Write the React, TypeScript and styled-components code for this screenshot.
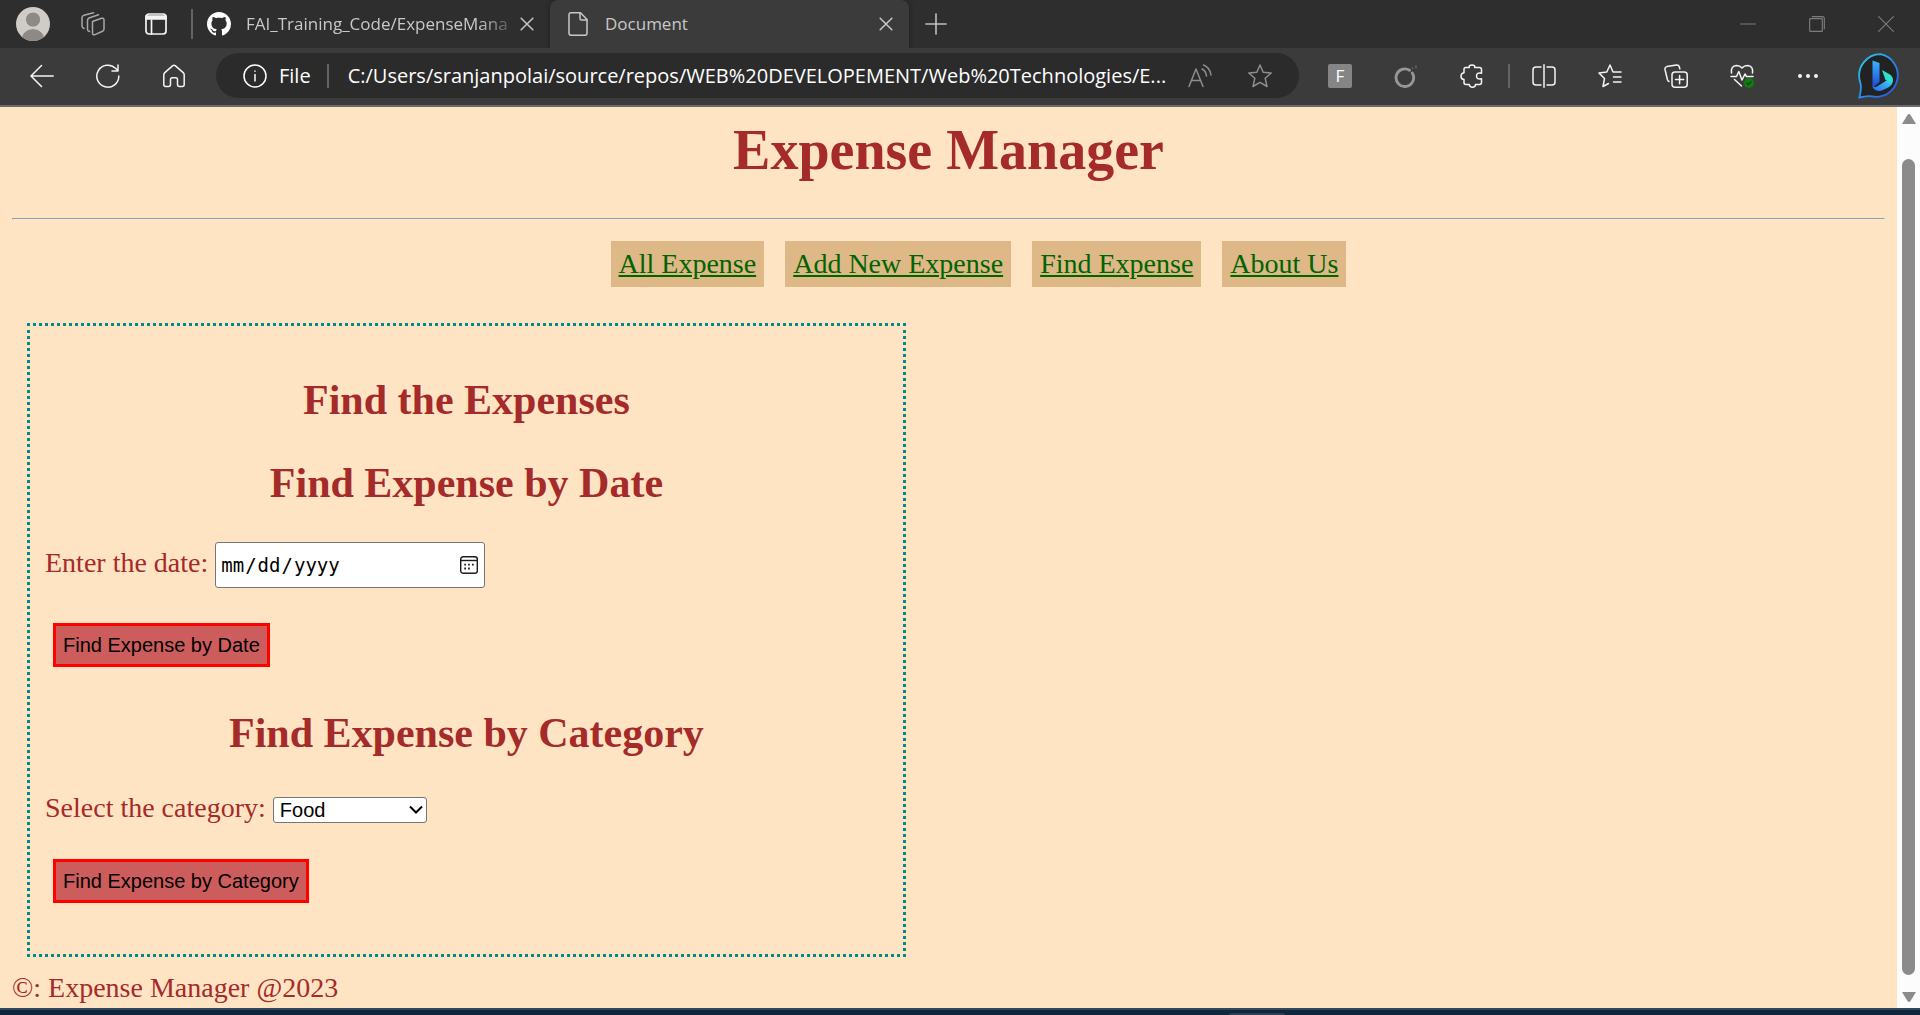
import React, { useState } from "react";
import styled, { createGlobalStyle } from "styled-components";

const GlobalStyle = createGlobalStyle`
  *, *::before, *::after { box-sizing: border-box; }
  body {
    margin: 0;
    background: #ffe4c4;
    font-family: "Liberation Serif", "Times New Roman", serif;
  }
  button { font: inherit; color: inherit; }
`;

const uiFont = `"Open Sans", "Noto Sans", sans-serif`;

const Screen = styled.div`
  min-height: 100vh;
  display: flex;
  flex-direction: column;
`;

/* ---------- tab strip ---------- */

const TabStrip = styled.div`
  display: flex;
  height: 48px;
  background: #2e2e2e;
  font-family: ${uiFont};
  font-size: 17px;
  color: #c8c8c8;
`;

const IconButton = styled.button<{ $width: number; $color?: string }>`
  flex: none;
  width: ${(p) => p.$width}px;
  padding: 0;
  border: 0;
  background: none;
  color: ${(p) => p.$color ?? "#f4f4f4"};
  display: flex;
  align-items: center;
  justify-content: center;
`;

const Tab = styled.div<{ $active?: boolean; $width: number }>`
  flex: 0 1 ${(p) => p.$width}px;
  min-width: 0;
  display: flex;
  align-items: center;
  padding: 0 16px 0 ${(p) => (p.$active ? 16 : 14)}px;
  background: ${(p) => (p.$active ? "#3b3b3b" : "transparent")};
  border-radius: 8px 8px 0 0;
  box-shadow: ${(p) => (p.$active ? "0 0 4px #1c1c1c" : "none")};
  svg { flex: none; }
`;

const TabTitle = styled.span<{ $fade?: boolean }>`
  flex: 1;
  min-width: 0;
  margin-left: 15px;
  overflow: hidden;
  white-space: nowrap;
  line-height: 24px;
  mask-image: ${(p) =>
    p.$fade ? "linear-gradient(to right, #000 85%, transparent)" : "none"};
`;

const Rule = styled.span<{ $height: number }>`
  flex: none;
  align-self: center;
  width: 2px;
  height: ${(p) => p.$height}px;
  background: #646464;
`;

const Spacer = styled.div`
  flex: 1;
`;

/* ---------- toolbar ---------- */

const Toolbar = styled.div`
  position: relative;
  display: flex;
  align-items: center;
  height: 59px;
  padding: 0 17px 2px 9px;
  background: #3b3b3b;
  border-bottom: 2px solid #6b6b6b;
  font-family: ${uiFont};
`;

const AddressBar = styled.div`
  flex: 1;
  min-width: 0;
  display: flex;
  align-items: center;
  height: 45px;
  margin: 0 8px 0 9px;
  padding: 0 9px 0 27px;
  border-radius: 23px;
  background: #2b2b2b;
  color: #ffffff;
  font-size: 20px;
`;

const SchemeLabel = styled.label`
  display: flex;
  align-items: center;
  gap: 12px;
  padding-right: 16px;
`;

const AddressInput = styled.input`
  flex: 1;
  min-width: 0;
  margin-left: 19px;
  padding: 0;
  border: 0;
  outline: 0;
  background: none;
  color: inherit;
  font: inherit;
  text-overflow: ellipsis;
`;

const ToolRule = styled(Rule)`
  margin: 0 1px 0 3px;
`;

const LetterBadge = styled.span`
  width: 24px;
  height: 24px;
  border-radius: 2px;
  background: #858585;
  color: #ffffff;
  font-size: 17px;
  line-height: 24px;
`;

const AssistantButton = styled(IconButton)`
  margin-left: 17px;
`;

/* ---------- page ---------- */

const Viewport = styled.div`
  flex: 1;
  display: flex;
`;

const Page = styled.div`
  flex: 1;
  min-width: 0;
  padding: 11px 12px 4px;
  color: #a52a2a;
  background: #ffe4c4;
  font-size: 28px;
  line-height: 32px;
`;

const Title = styled.h1`
  margin: 0 0 36px;
  font-size: 56px;
  line-height: 64px;
  text-align: center;
`;

const Divider = styled.hr`
  margin: 0 0 21px;
  border: 1px solid;
  border-color: #9a9a9a #eeeeee #eeeeee #9a9a9a;
`;

const Nav = styled.nav`
  display: flex;
  flex-wrap: wrap;
  justify-content: center;
  gap: 21px;
  padding-left: 60px;
`;

const NavLink = styled.a`
  padding: 7px 8px;
  background: #deb887;
  color: #006400;
`;

const Panel = styled.main`
  display: flex;
  flex-direction: column;
  gap: 35px;
  box-sizing: content-box;
  width: 45%;
  margin: 36px 15px 15px;
  padding: 50px 15px 51px;
  border: 3px dotted #008b8b;
`;

const Form = styled.form`
  display: flex;
  flex-direction: column;
  gap: 35px;

  & + & { margin-top: 7px; }
`;

const Heading = styled.h2`
  margin: 0;
  font-size: 42px;
  line-height: 48px;
  text-align: center;
`;

const Field = styled.div`
  display: flex;
  align-items: baseline;
  gap: 7px;
`;

const ControlBox = styled.div`
  position: relative;
  display: flex;

  svg {
    position: absolute;
    top: 0;
    bottom: 0;
    margin: auto 0;
    pointer-events: none;
  }
`;

const DateBox = styled(ControlBox)`
  svg { right: 7px; }
`;

const SelectBox = styled(ControlBox)`
  svg { right: 4px; }
`;

const DateInput = styled.input`
  width: 270px;
  height: 46px;
  padding: 0 6px 0 4px;
  border: 1px solid #767676;
  border-radius: 3px;
  background: #ffffff;
  color: #000000;
  font-family: "DejaVu Sans Mono", monospace;
  font-size: 19px;

  &::-webkit-calendar-picker-indicator { opacity: 0; }
`;

const CategorySelect = styled.select`
  appearance: none;
  width: 154px;
  height: 26px;
  padding: 0 24px 0 6px;
  border: 1px solid #767676;
  border-radius: 3px;
  background: #ffffff;
  color: #000000;
  font-family: "Liberation Sans", Arial, sans-serif;
  font-size: 20px;
`;

const SubmitButton = styled.button`
  align-self: flex-start;
  margin: 0 8px;
  padding: 7px;
  border: 3px solid #ff0000;
  background: #cd5c5c;
  color: #000000;
  font-family: "Liberation Sans", Arial, sans-serif;
  font-size: 20px;
  line-height: 24px;
`;

/* ---------- scrollbar and desktop edge ---------- */

const ScrollTrack = styled.div`
  width: 23px;
  display: flex;
  flex-direction: column;
  align-items: center;
  justify-content: space-between;
  padding: 7px 0 6px;
  background: #fcfcfc;
`;

const ScrollThumb = styled.div`
  flex: 1;
  width: 13px;
  margin: 35px 0 17px;
  border-radius: 7px;
  background: #8b8b8b;
`;

const DesktopEdge = styled.div`
  display: flex;
  align-items: flex-end;
  height: 7px;
  padding-left: 64%;
  background: #10263c;
  border-top: 2px solid #33475a;
`;

const DesktopHandle = styled.div`
  width: 56px;
  height: 2px;
  border-radius: 2px 2px 0 0;
  background: #2c3d50;
`;

/* ---------- drawings ---------- */

type IconProps = { children: React.ReactNode; size?: number; weight?: number };

const Icon = ({ children, size = 24, weight = 1.5 }: IconProps) => (
  <svg
    width={size}
    height={size}
    viewBox="0 0 24 24"
    fill="none"
    stroke="currentColor"
    strokeWidth={weight}
    strokeLinecap="round"
    strokeLinejoin="round"
    aria-hidden="true"
  >
    {children}
  </svg>
);

const CloseIcon = () => (
  <Icon size={14} weight={2.6}>
    <path d="M2 2l20 20M22 2L2 22" />
  </Icon>
);

const AvatarIcon = () => (
  <svg width="34" height="34" viewBox="0 0 34 34" aria-hidden="true">
    <clipPath id="avatarClip"><circle cx="17" cy="17" r="17" /></clipPath>
    <circle cx="17" cy="17" r="17" fill="#cfccc8" />
    <g clipPath="url(#avatarClip)" fill="#8e8985" stroke="#dedbd7" strokeWidth="0.8">
      <circle cx="17" cy="12.6" r="7.6" />
      <ellipse cx="17" cy="32" rx="11.6" ry="10.4" />
    </g>
  </svg>
);

const GithubIcon = () => (
  <svg width="24" height="24" viewBox="0 0 16 16" fill="#ffffff" aria-hidden="true">
    <path d="M8 0C3.58 0 0 3.58 0 8c0 3.54 2.29 6.53 5.47 7.59.4.07.55-.17.55-.38 0-.19-.01-.82-.01-1.49-2.01.37-2.53-.49-2.69-.94-.09-.23-.48-.94-.82-1.13-.28-.15-.68-.52-.01-.53.63-.01 1.08.58 1.23.82.72 1.21 1.87.87 2.33.66.07-.52.28-.87.51-1.07-1.78-.2-3.64-.89-3.64-3.95 0-.87.31-1.59.82-2.15-.08-.2-.36-1.02.08-2.12 0 0 .67-.21 2.2.82.64-.18 1.32-.27 2-.27s1.36.09 2 .27c1.53-1.04 2.2-.82 2.2-.82.44 1.1.16 1.92.08 2.12.51.56.82 1.27.82 2.15 0 3.07-1.87 3.75-3.65 3.95.29.25.54.73.54 1.48 0 1.07-.01 1.93-.01 2.2 0 .21.15.46.55.38A8.01 8.01 0 0 0 16 8c0-4.42-3.58-8-8-8z" />
  </svg>
);

const AssistantIcon = () => (
  <svg width="45" height="46" viewBox="0 0 45 46" aria-hidden="true">
    <defs>
      <linearGradient id="bubble" x1="0" y1="0" x2="1" y2="1">
        <stop offset="0" stopColor="#25d4ec" />
        <stop offset="0.5" stopColor="#2b8cf0" />
        <stop offset="1" stopColor="#2350e0" />
      </linearGradient>
      <linearGradient id="stem" x1="0" y1="0" x2="0" y2="1">
        <stop offset="0" stopColor="#38b6ff" />
        <stop offset="1" stopColor="#1d46d8" />
      </linearGradient>
      <linearGradient id="bowl" x1="0" y1="1" x2="1" y2="0">
        <stop offset="0" stopColor="#2b64ee" />
        <stop offset="1" stopColor="#38d6f5" />
      </linearGradient>
    </defs>
    <path
      d="M22.500 1.200A21.500 21.500 0 1 1 14 43.400C9 42.400 5 44.200 1.400 44.600C2.600 40 3.600 36 2.600 31L1.600 27A21.500 21.500 0 0 1 22.500 1.200Z"
      fill="#222222"
      stroke="url(#bubble)"
      strokeWidth="1.800"
    />
    <path d="M14.500 7.500L21.500 10V29L15 34.500C14.600 34 14.500 33.400 14.500 32.500Z" fill="url(#stem)" />
    <path d="M24 17L32 21.500C36 24.500 35.500 29 33.500 31.500C32 29 30 28.200 27.500 27Z" fill="#2fe0cc" />
    <path d="M14.500 32C15.500 35 18 34.500 21.500 32L29 27.300C32 28 34 30 33.800 31.200C32 34 27 36.300 23 37.800C18 38.700 14.500 36 14.500 32Z" fill="url(#bowl)" />
  </svg>
);

const ArrowHead = ({ down }: { down?: boolean }) => (
  <svg width="14" height="10" viewBox="0 0 14 10" fill="#8b8b8b" aria-hidden="true">
    <path d={down ? "M0 0H14L8.500 9Q7 11 5.500 9Z" : "M0 10H14L8.500 1Q7 -1 5.500 1Z"} />
  </svg>
);

const CalendarIcon = () => (
  <svg width="18" height="18" viewBox="0 0 18 18" fill="none" stroke="#1d1d1d" strokeWidth="1.400" aria-hidden="true">
    <rect x="0.700" y="0.700" width="16.600" height="16.600" rx="2.600" />
    <path d="M1 4.500H17" />
    <path d="M4.300 8.700h1.700M8.100 8.700h1.700M12 8.700h1.700M4.300 12.500h1.700M8.100 12.500h1.700" strokeWidth="1.800" />
  </svg>
);

const ChevronIcon = () => (
  <svg width="14" height="10" viewBox="0 0 14 10" fill="none" stroke="#000000" strokeWidth="2" aria-hidden="true">
    <path d="M1 1.500L7 7.500L13 1.500" />
  </svg>
);

const starPath =
  "M12 1L15.200 8.200L23.200 9L17.200 14.300L19 22.500L12 18.400L5 22.500L6.800 14.300L0.800 9L8.800 8.200Z";

const navItems = ["All Expense", "Add New Expense", "Find Expense", "About Us"];
const categories = ["Food", "Entertain", "Travel", "Rent"];

export default function App() {
  const [category, setCategory] = useState("Food");
  const hold = (e: React.FormEvent) => e.preventDefault();

  return (
    <Screen>
      <GlobalStyle />

      <TabStrip>
        <IconButton $width={66} aria-label="Profile"><AvatarIcon /></IconButton>
        <IconButton $width={54} $color="#a8a8a8" aria-label="Workspaces">
          <Icon weight={1.5}>
            <path d="M11.500 9.500L20.500 6.300Q23 5.600 23 8V17Q23 18.600 21.500 19.300L14 22.600Q11.500 23.500 11.500 21V10.500Q11.500 9.700 12.500 9.200" />
            <path d="M8.500 19.500Q6.500 19 6.500 17.500V8.500Q6.500 6.600 8 6L17.500 2.800" />
            <path d="M3 16.500Q1 15.500 1 14V5.500Q1 3.800 3 3.200L12.500 0.800" />
          </Icon>
        </IconButton>
        <IconButton $width={71} aria-label="Tab actions">
          <Icon weight={1.7}>
            <rect x="2" y="2" width="20" height="20" rx="3" />
            <path d="M2 4h20v3H2z" fill="currentColor" />
            <path d="M7.500 8v14" />
          </Icon>
        </IconButton>
        <Rule $height={30} />
        <Tab $width={357}>
          <GithubIcon />
          <TabTitle $fade>FAI_Training_Code/ExpenseMana</TabTitle>
          <IconButton $width={14} $color="#c8c8c8" aria-label="Close tab"><CloseIcon /></IconButton>
        </Tab>
        <Tab $width={359} $active>
          <Icon>
            <path d="M5 0.800H14.500L21 7.500V21Q21 23.200 19 23.200H5Q3 23.200 3 21V3Q3 0.800 5 0.800Z" />
            <path d="M14 1V6.500Q14 8 15.500 8H21" />
          </Icon>
          <TabTitle>Document</TabTitle>
          <IconButton $width={14} $color="#c8c8c8" aria-label="Close tab"><CloseIcon /></IconButton>
        </Tab>
        <IconButton $width={53} $color="#c0c0c0" aria-label="New tab">
          <Icon weight={1.6}><path d="M12 2v20M2 12h20" /></Icon>
        </IconButton>
        <Spacer />
        <IconButton $width={69} $color="#7c7c7c" aria-label="Minimize">
          <Icon size={16}><path d="M1 12h22" /></Icon>
        </IconButton>
        <IconButton $width={69} $color="#7c7c7c" aria-label="Restore">
          <Icon size={16} weight={1.7}>
            <rect x="1" y="4" width="19" height="19" rx="1" />
            <path d="M5 1H20Q23 1 23 4V19" />
          </Icon>
        </IconButton>
        <IconButton $width={69} $color="#7c7c7c" aria-label="Close window">
          <Icon size={16} weight={1.7}><path d="M1 1l22 22M23 1L1 23" /></Icon>
        </IconButton>
      </TabStrip>

      <Toolbar>
        <IconButton $width={66} aria-label="Back">
          <Icon><path d="M23.200 12H1M11.500 1.500L1 12l10.500 10.500" /></Icon>
        </IconButton>
        <IconButton $width={66} aria-label="Refresh">
          <Icon>
            <path d="M22.800 12A11 11 0 1 1 19.500 4.300L22 6.800M22 1V7H16" />
          </Icon>
        </IconButton>
        <IconButton $width={66} aria-label="Home">
          <Icon>
            <path d="M1.800 10.800Q1.800 9.500 2.800 8.600L10.800 1.600Q12 .7 13.200 1.600L21.200 8.600Q22.200 9.500 22.200 10.800V20.500Q22.200 22.500 20.200 22.500H17.500Q15.500 22.500 15.500 20.500V15.500Q15.500 13.700 13.700 13.700H10.300Q8.500 13.700 8.500 15.500V20.500Q8.500 22.500 6.500 22.500H3.800Q1.800 22.500 1.800 20.500Z" />
          </Icon>
        </IconButton>

        <AddressBar>
          <SchemeLabel htmlFor="address">
            <Icon>
              <circle cx="12" cy="12" r="11" />
              <path d="M12 10.500V17M12 7v.2" />
            </Icon>
            File
          </SchemeLabel>
          <Rule $height={24} />
          <AddressInput
            id="address"
            readOnly
            value="C:/Users/sranjanpolai/source/repos/WEB%20DEVELOPEMENT/Web%20Technologies/E..."
          />
          <IconButton $width={60} $color="#8e8e8e" aria-label="Read aloud">
            <Icon>
              <path d="M1 22.500L8 5L15 22.500M3.500 16.500H12.500" />
              <path d="M14 5Q18 7 18.500 12M15.500 1Q22 3.500 23 11" />
            </Icon>
          </IconButton>
          <IconButton $width={60} $color="#8e8e8e" aria-label="Add to favorites">
            <Icon><path d={starPath} /></Icon>
          </IconButton>
        </AddressBar>

        <IconButton $width={66} aria-label="F extension"><LetterBadge>F</LetterBadge></IconButton>
        <IconButton $width={66} $color="#979797" aria-label="Loader extension">
          <Icon>
            <path d="M18.300 9A8.800 8.800 0 1 1 15.500 6.200" strokeWidth="2.800" />
            <path d="M18.500 4v.5M22 2v2" stroke="#666666" />
          </Icon>
        </IconButton>
        <IconButton $width={66} aria-label="Extensions">
          <Icon>
            <path d="M5.500 3.500H9.300Q8.700 1 12 1T14.700 3.500H19.500Q21.500 3.500 21.500 5.500V9.300Q16.500 8.200 16.500 12T21.500 14.700V18.500Q21.500 20.500 19.500 20.500H15.500Q15.500 23.200 12.500 23.200T9.300 20.500H6Q4 20.500 4 18.500V15.500Q1 15.500 1 12.300T4 8.700V5.500Q4 3.500 5.500 3.500" />
          </Icon>
        </IconButton>
        <ToolRule $height={24} />
        <IconButton $width={66} aria-label="Split screen">
          <Icon>
            <path d="M9 3H4Q1 3 1 6V18Q1 21 4 21H9M15 3H20Q23 3 23 6V18Q23 21 20 21H15M12 .8V23.200" />
          </Icon>
        </IconButton>
        <IconButton $width={66} aria-label="Favorites">
          <Icon>
            <path d="M15.500 8H15L12 1L8.800 8L1 9L6.500 14.500L5 22.500L10.500 19.500M15.500 8H23M15.500 13H23M15.500 18H23" />
          </Icon>
        </IconButton>
        <IconButton $width={66} aria-label="Collections">
          <Icon>
            <rect x="8" y="8" width="15.200" height="15.200" rx="3" />
            <path d="M15.600 11.500V19.700M11.500 15.600H19.700M5 17.500Q3.800 17 3.400 15.500L1 5.500Q.6 3.200 2.800 2.600L12.500 .9Q14.700 .7 15.300 2.800L15.800 4.800" />
          </Icon>
        </IconButton>
        <IconButton $width={66} aria-label="Browser essentials">
          <Icon>
            <path d="M1 12.500H6.500L8.800 7.500L12 16L15 10L16.500 12.500H23M1.500 9Q.5 2 6.500 1.500Q10 1.500 12 4Q14 1.500 17.500 1.500Q23.500 2 22.500 9M4.500 15.500L11.500 22" />
            <circle cx="19" cy="19" r="5" fill="#107c10" stroke="none" />
            <path d="M16.800 19.200l1.500 1.500 2.800-3" stroke="#173d17" strokeWidth="1.200" />
          </Icon>
        </IconButton>
        <IconButton $width={66} aria-label="Settings and more">
          <Icon>
            <g fill="currentColor" stroke="none">
              <circle cx="4" cy="12" r="2" />
              <circle cx="12" cy="12" r="2" />
              <circle cx="20" cy="12" r="2" />
            </g>
          </Icon>
        </IconButton>
        <AssistantButton $width={45} aria-label="Assistant"><AssistantIcon /></AssistantButton>
      </Toolbar>

      <Viewport>
        <Page>
          <Title>Expense Manager</Title>
          <Divider />
          <Nav>
            {navItems.map((item) => (
              <NavLink key={item} href="#">{item}</NavLink>
            ))}
          </Nav>

          <Panel>
            <Heading>Find the Expenses</Heading>
            <Form onSubmit={hold}>
              <Heading>Find Expense by Date</Heading>
              <Field>
                <label htmlFor="date">Enter the date:</label>
                <DateBox>
                  <DateInput id="date" type="date" />
                  <CalendarIcon />
                </DateBox>
              </Field>
              <SubmitButton type="submit">Find Expense by Date</SubmitButton>
            </Form>
            <Form onSubmit={hold}>
              <Heading>Find Expense by Category</Heading>
              <Field>
                <label htmlFor="category">Select the category:</label>
                <SelectBox>
                  <CategorySelect
                    id="category"
                    value={category}
                    onChange={(e) => setCategory(e.target.value)}
                  >
                    {categories.map((c) => (
                      <option key={c}>{c}</option>
                    ))}
                  </CategorySelect>
                  <ChevronIcon />
                </SelectBox>
              </Field>
              <SubmitButton type="submit">Find Expense by Category</SubmitButton>
            </Form>
          </Panel>

          <footer>©: Expense Manager @2023</footer>
        </Page>

        <ScrollTrack aria-hidden="true">
          <ArrowHead />
          <ScrollThumb />
          <ArrowHead down />
        </ScrollTrack>
      </Viewport>

      <DesktopEdge><DesktopHandle /></DesktopEdge>
    </Screen>
  );
}
